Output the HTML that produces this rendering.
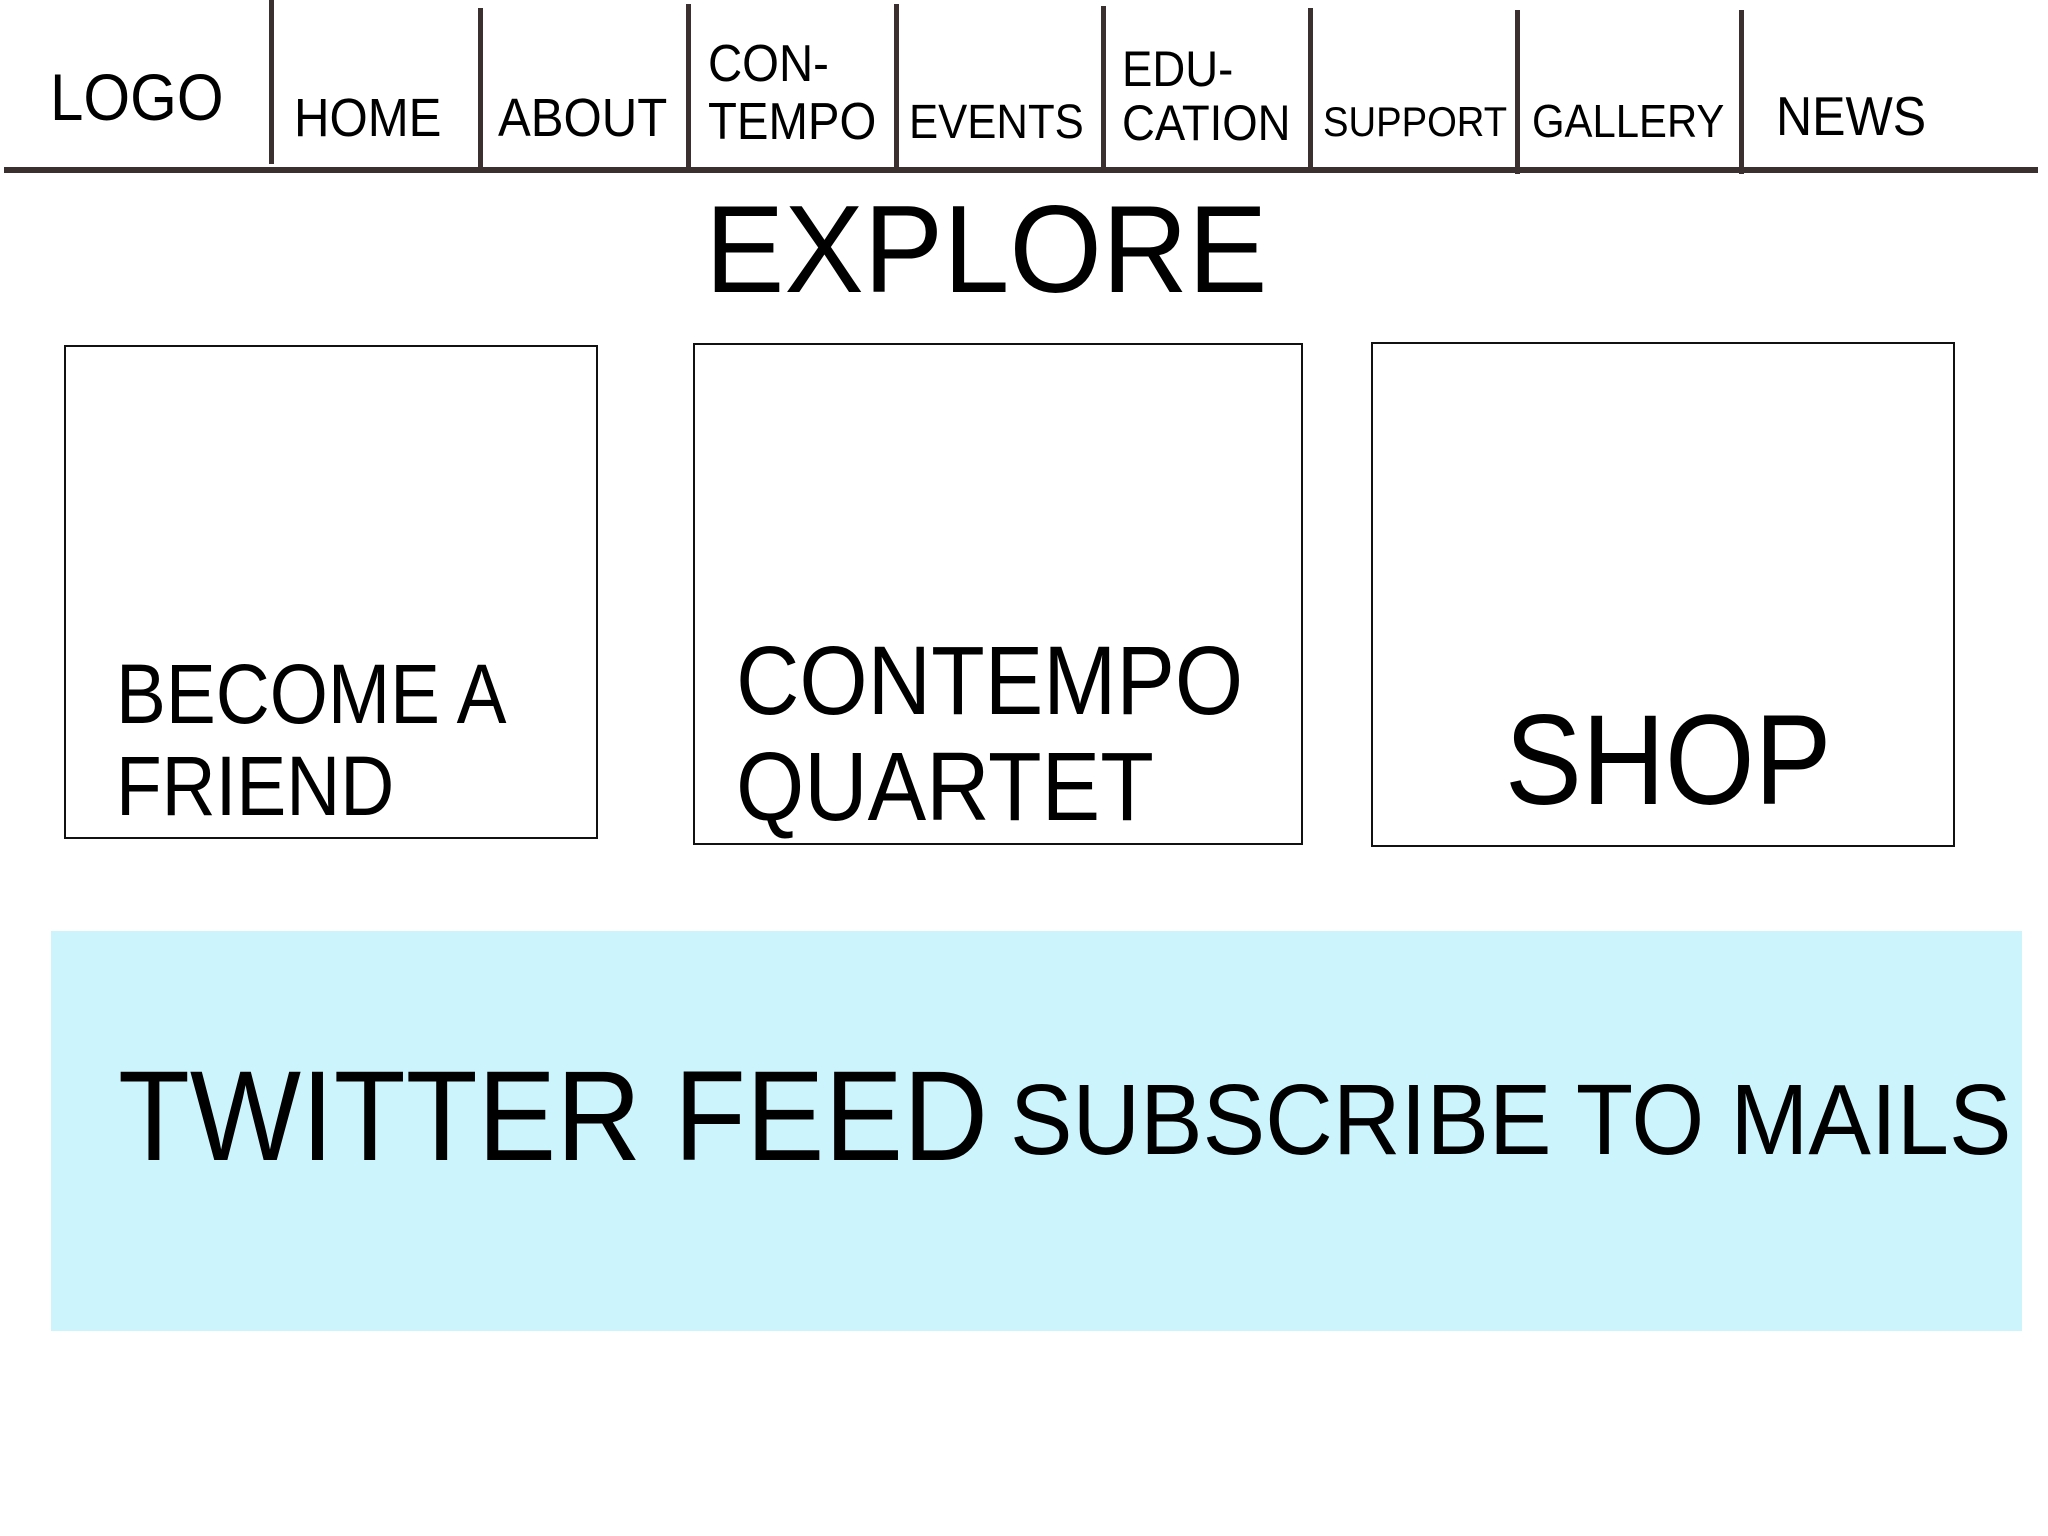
<!DOCTYPE html>
<html><head><meta charset="utf-8"><style>
body{margin:0;width:2048px;height:1536px;background:#fff;position:relative;overflow:hidden;font-family:"Liberation Sans",sans-serif;color:#000}
.t{position:absolute;white-space:nowrap;line-height:1;transform-origin:0 0;transform:scaleX(0.91)}
.v{position:absolute;width:5px;background:#3a3030;top:6px;height:164px}
.box{position:absolute;border:2.5px solid #111;box-sizing:border-box}
</style></head><body>
<div style="position:absolute;left:4px;top:167px;width:2034px;height:6px;background:#3a3030"></div>
<div class="v" style="left:269px;top:0"></div>
<div class="v" style="left:478px;top:8px"></div>
<div class="v" style="left:686px;top:4px"></div>
<div class="v" style="left:894px;top:4px"></div>
<div class="v" style="left:1101px;top:6px"></div>
<div class="v" style="left:1308px;top:8px"></div>
<div class="v" style="left:1515px;top:10px"></div>
<div class="v" style="left:1739px;top:10px"></div>

<div class="t" style="left:50px;top:64px;font-size:66px">LOGO</div>
<div class="t" style="left:294px;top:91px;font-size:54px">HOME</div>
<div class="t" style="left:498px;top:91px;font-size:54px">ABOUT</div>
<div class="t" style="left:708px;top:38px;font-size:52px">CON-</div>
<div class="t" style="left:708px;top:96px;font-size:52px">TEMPO</div>
<div class="t" style="left:909px;top:99px;font-size:48px">EVENTS</div>
<div class="t" style="left:1122px;top:44px;font-size:50px">EDU-</div>
<div class="t" style="left:1122px;top:98px;font-size:50px">CATION</div>
<div class="t" style="left:1323px;top:101px;font-size:42px">SUPPORT</div>
<div class="t" style="left:1532px;top:98px;font-size:46px">GALLERY</div>
<div class="t" style="left:1776px;top:89px;font-size:55px">NEWS</div>

<div class="t" style="left:705px;top:188px;font-size:124px;transform:scaleX(0.96)">EXPLORE</div>

<div class="box" style="left:64px;top:345px;width:534px;height:494px"></div>
<div class="box" style="left:693px;top:343px;width:610px;height:502px"></div>
<div class="box" style="left:1371px;top:342px;width:584px;height:505px"></div>

<div class="t" style="left:116px;top:652px;font-size:84px;transform:scaleX(0.89)">BECOME A</div>
<div class="t" style="left:116px;top:744px;font-size:84px;transform:scaleX(0.89)">FRIEND</div>
<div class="t" style="left:736px;top:632px;font-size:97px;transform:scaleX(0.905)">CONTEMPO</div>
<div class="t" style="left:736px;top:738px;font-size:97px;transform:scaleX(0.905)">QUARTET</div>
<div class="t" style="left:1505px;top:697px;font-size:128px;transform:scaleX(0.9)">SHOP</div>

<div style="position:absolute;left:51px;top:931px;width:1971px;height:400px;background:#ccf4fc"></div>
<div class="t" style="left:118px;top:1053px;font-size:128px;transform:scaleX(0.92)">TWITTER FEED</div>
<div class="t" style="left:1010px;top:1070px;font-size:100px;transform:scaleX(0.937)">SUBSCRIBE TO MAILS</div>
</body></html>
